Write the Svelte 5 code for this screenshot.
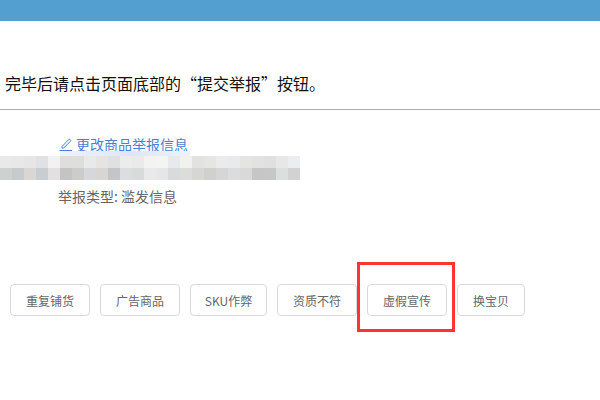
<script>
  const top = ['#e9e9e9','#e8e8e8','#e8e6e5','#dfe1e4','#f2f2f2','#dfdedd','#dededd','#e8e9e9','#e6e4e2','#dfe0e2','#ececec','#eaeaea','#f3f3f2','#f4f4f2','#e8e9ec','#f1f1ee','#e2e2e1','#e5e5e3','#ebebeb','#e9eaec','#e4e4e2','#e2e2e2','#dfe0df','#e7e7e7','#ecedf0'];
  const bottom = ['#cfd0d0','#c8cbcd','#d9d6d4','#c8cdd1','#e2e0e0','#c4c4c4','#cccccb','#d5d7da','#d8d6d3','#c4c5c7','#dcdde0','#d9dada','#e9e9ea','#e4e6e8','#d8dadc','#dcdcd9','#d6d6d5','#d0d0ce','#d6d6d6','#dcdcdc','#d9d9d9','#c6c6c6','#c6c7c7','#dcdfde','#d2d2d3'];
  const reasons = [
    { label: '重复铺货', width: 80 },
    { label: '广告商品', width: 80 },
    { label: 'SKU作弊', width: 77 },
    { label: '资质不符', width: 80 },
    { label: '虚假宣传', width: 80, marked: true },
    { label: '换宝贝', width: 68 }
  ];
</script>

<div class="page" lang="zh-CN">
  <header class="bar"></header>

  <p class="notice">完毕后请点击页面底部的“提交举报”按钮。</p>

  <section class="details">
    <a class="edit" href="#edit">
      <svg width="14" height="14" viewBox="0 0 14 14" fill="none" stroke="#4a7fd8" stroke-width="1">
        <path d="M3 9.5 9.6 2.6a1 1 0 0 1 1.5 0l.3.3a1 1 0 0 1 0 1.5L4.6 11H3Z" />
        <path d="M0.5 13.5H13" />
      </svg>
      <span>更改商品举报信息</span>
    </a>

    <div class="mosaic" aria-hidden="true">
      <div class="smudge"></div>
      <div class="cells">
        {#each top as color}<i style:background={color}></i>{/each}
      </div>
      <div class="cells">
        {#each bottom as color}<i style:background={color}></i>{/each}
      </div>
    </div>

    <p class="type">举报类型: 滥发信息</p>
  </section>

  <div class="reasons">
    {#each reasons as reason}
      <button class="reason" style:width="{reason.width}px">
        {reason.label}
        {#if reason.marked}<span class="mark"></span>{/if}
      </button>
    {/each}
  </div>
</div>

<style>
  :global(body) {
    margin: 0;
    background: #fff;
  }

  .page {
    width: 600px;
    height: 400px;
    overflow: hidden;
    font-family: "Noto Sans CJK SC", "Liberation Sans", sans-serif;
  }

  .bar {
    height: 21px;
    background: #539fd0;
  }

  .notice {
    margin: 0;
    height: 89px;
    box-sizing: border-box;
    padding: 50px 0 0 5px;
    font-size: 16px;
    line-height: 24px;
    color: #111;
    border-bottom: 1px solid #aaa;
  }

  .details {
    padding-top: 24px;
  }

  .edit {
    display: flex;
    align-items: center;
    gap: 3px;
    margin-left: 59px;
    height: 20px;
    font-size: 14px;
    line-height: 20px;
    color: #4a7fd8;
    text-decoration: none;
  }

  .mosaic {
    position: relative;
    margin-top: 2px;
    width: 300px;
    height: 24px;
  }

  .smudge {
    position: absolute;
    left: 60px;
    top: -5px;
    width: 130px;
    height: 5px;
    background: linear-gradient(90deg, #eef2fb, #dfe6f7 55%, #eef2fb);
  }

  .cells {
    display: flex;
    height: 12px;
  }

  .cells i {
    flex: 0 0 12px;
  }

  .type {
    margin: 6px 0 0 58px;
    font-size: 14px;
    line-height: 20px;
    color: #666;
  }

  .reasons {
    display: flex;
    gap: 10px;
    margin: 78px 0 0 10px;
  }

  .reason {
    position: relative;
    height: 32px;
    padding: 0;
    box-sizing: border-box;
    background: #fff;
    border: 1px solid #d9d9d9;
    border-radius: 4px;
    font-family: inherit;
    font-size: 12px;
    color: #666;
  }

  .mark {
    position: absolute;
    left: -11px;
    top: -23px;
    width: 98px;
    height: 70px;
    box-sizing: border-box;
    border: 3px solid #f33;
  }
</style>
